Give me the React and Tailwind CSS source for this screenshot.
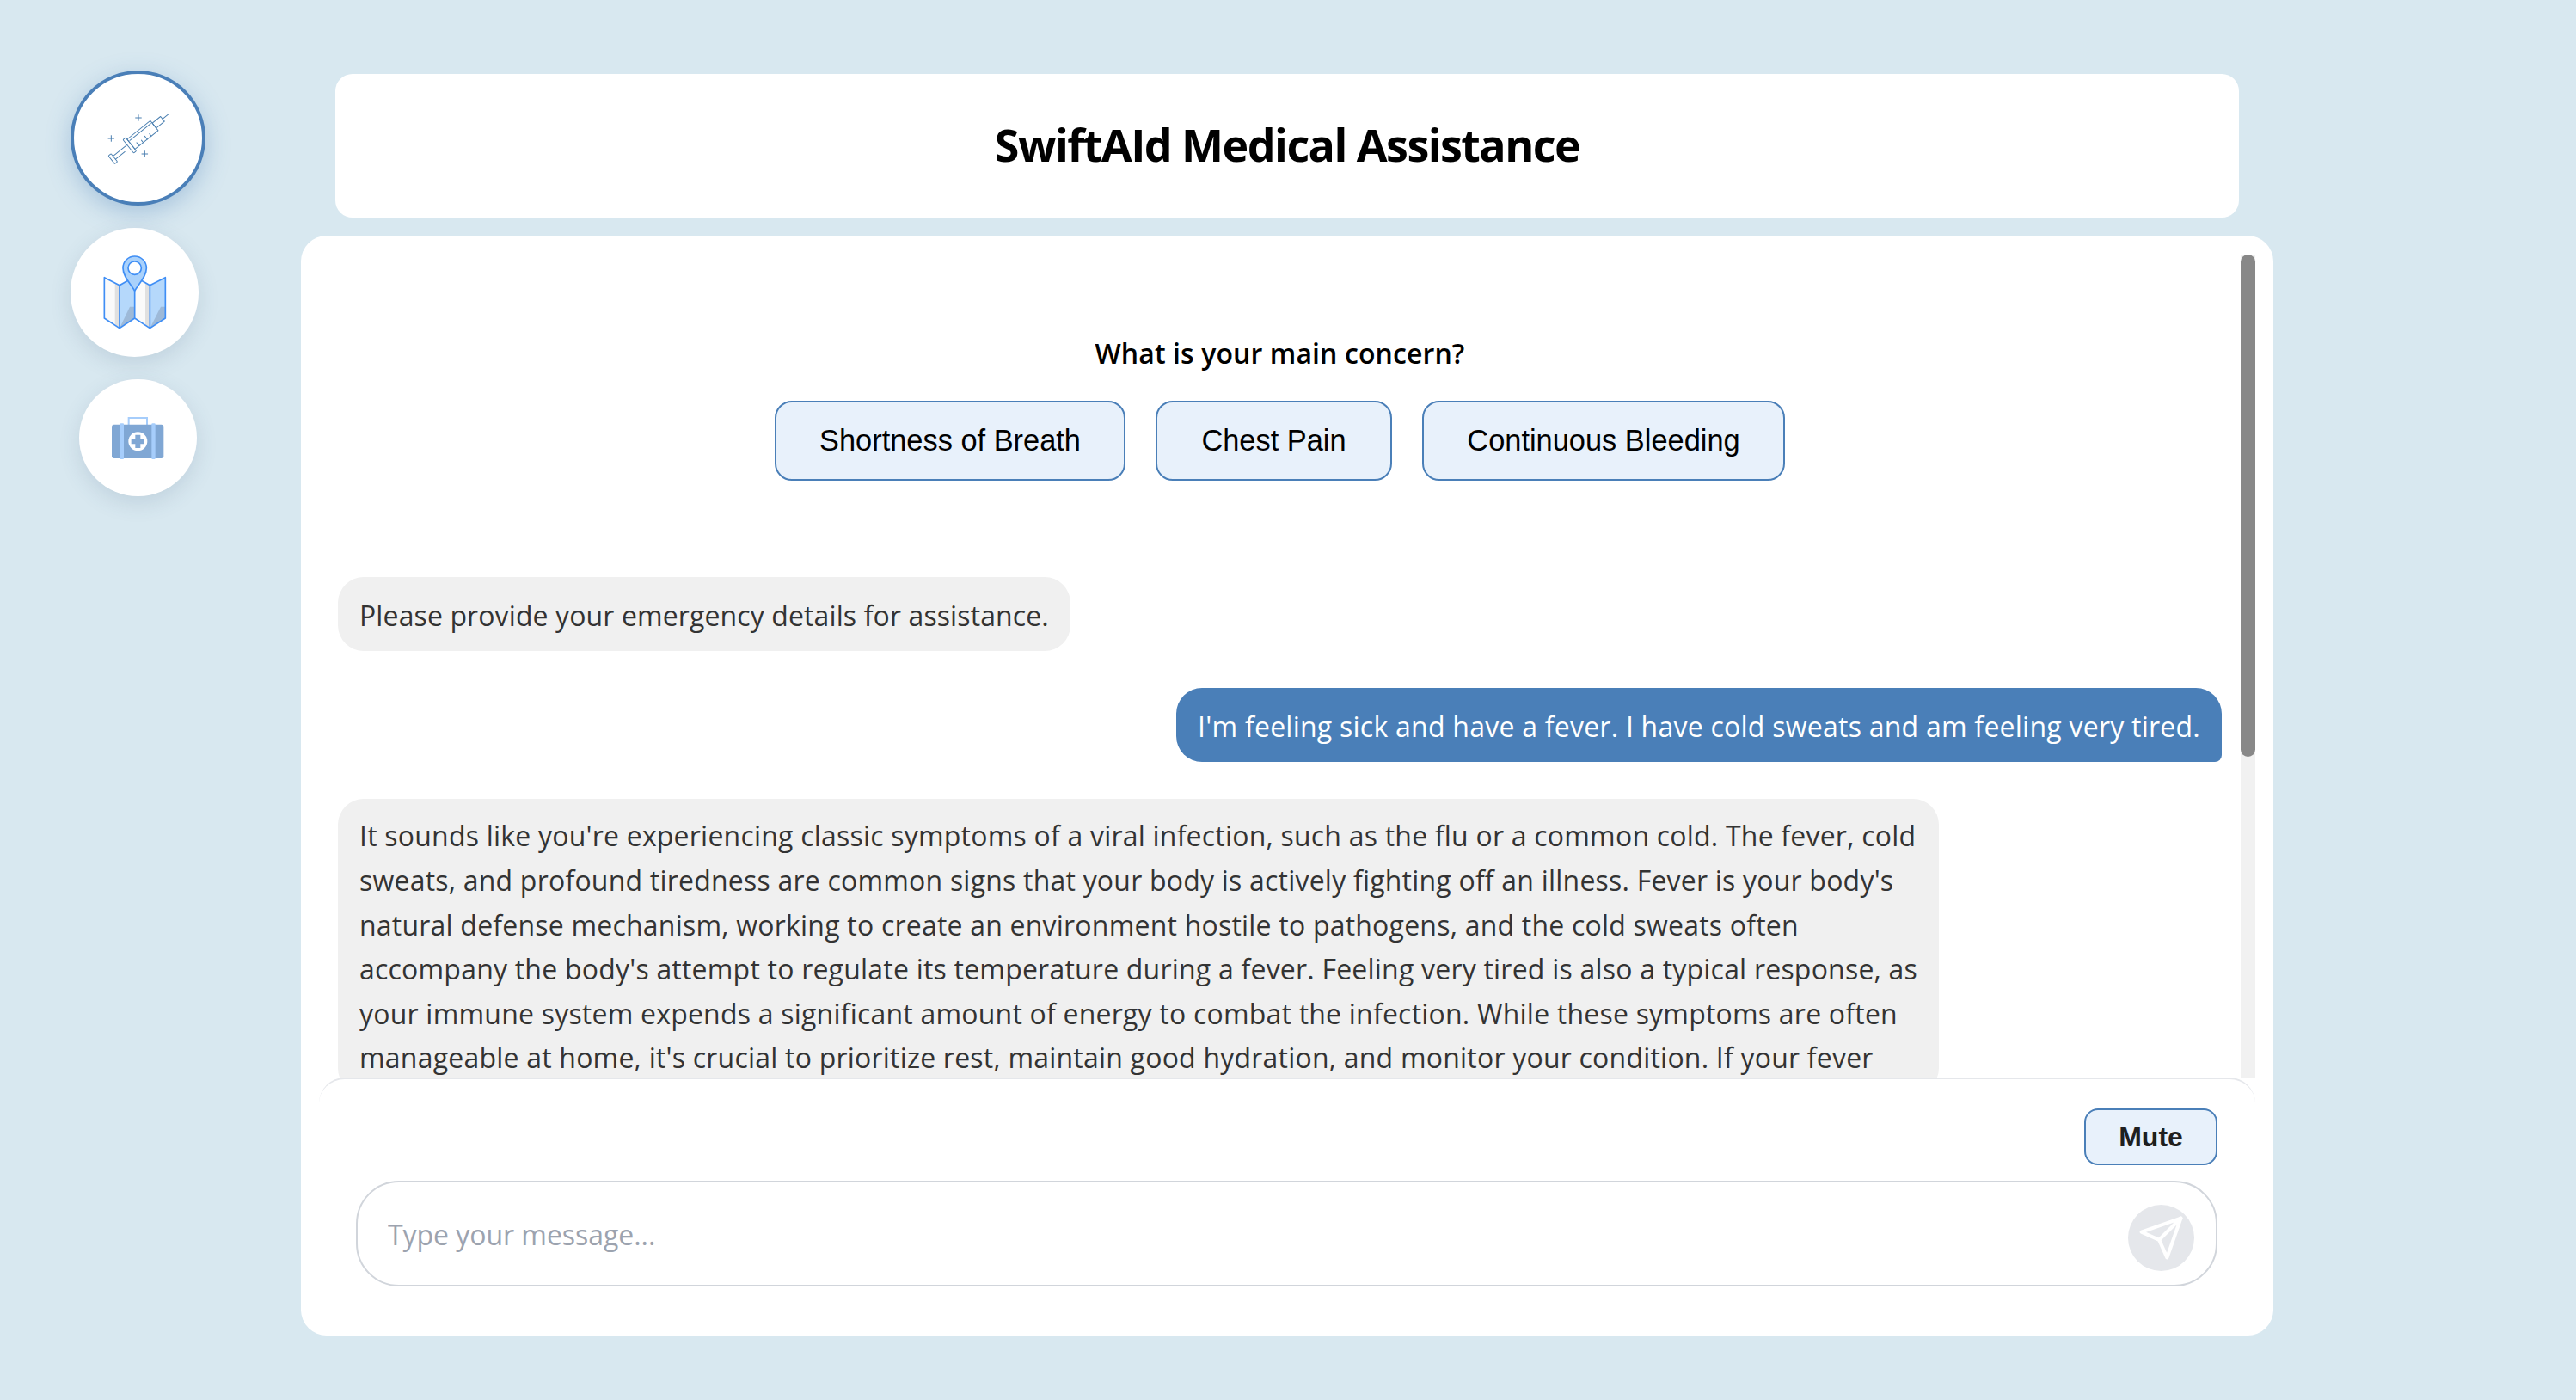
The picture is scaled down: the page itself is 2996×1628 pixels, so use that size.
const bodyFont = "font-['Open_Sans','Noto_Sans',sans-serif]";

function Syringe() {
  return (
    <svg width="100" height="100" viewBox="151 151 300 300" fill="none" stroke="#4a7fb0" strokeWidth="3" strokeLinejoin="round" strokeLinecap="round">
      <path d="M304 219v20M294 229h20M209 291v20M199 301h20M326 345v20M316 355h20" />
      <g transform="translate(215 372) rotate(-38.8)">
        <rect x="-6" y="-18" width="12" height="36" rx="3" />
        <path d="M6 -7H69M6 7H48" />
        <rect x="69" y="-30" width="12" height="60" rx="3" />
        <rect x="81" y="-22" width="104" height="44" />
        <path d="M86 -13H180M100 22V8M118 22V12M136 22V8M154 22V12" />
        <rect x="185" y="-11" width="37" height="22" />
        <path d="M222 0H247" />
      </g>
    </svg>
  );
}

function MapIcon() {
  return (
    <svg width="100" height="100" viewBox="140 120 300 300" fill="none" strokeLinejoin="round">
      <path d="M183 218L236 245V395L183 360Z" fill="#fafafa" />
      <path d="M220 237L236 245V395L220 385Z" fill="#e0e0e0" />
      <path d="M236 245L289 215V360L236 395Z" fill="#b5d8fb" />
      <path d="M272 320L289 320V360L236 395Z" fill="#9db9d8" />
      <path d="M289 215L342 245V395L289 360Z" fill="#fafafa" />
      <path d="M326 236L342 245V395L326 385Z" fill="#e0e0e0" />
      <path d="M342 245L396 218V360L342 395Z" fill="#b5d8fb" />
      <path d="M380 320L396 320V360L342 395Z" fill="#9db9d8" />
      <path d="M236 245L183 218V360L236 395L289 360L342 395L396 360V218L342 245L289 215L236 245ZM236 245V395M289 265V360M342 245V395" stroke="#3f8ef5" strokeWidth="5" />
      <path d="M289 265C275 240 248 215 248 185A41 41 0 0 1 330 185C330 215 303 240 289 265Z" fill="#a9d1fb" stroke="#3f8ef5" strokeWidth="5" />
      <circle cx="289" cy="185" r="23" fill="#fff" stroke="#3f8ef5" strokeWidth="5" />
    </svg>
  );
}

function KitIcon() {
  return (
    <svg width="100" height="100" viewBox="151 627 300 300" fill="none">
      <rect x="270" y="708" width="64" height="30" stroke="#a6cdfb" strokeWidth="6" />
      <rect x="211" y="731" width="181" height="118" rx="8" fill="#80a7d4" />
      <rect x="240" y="727" width="13" height="125" rx="3" fill="#a6cdfb" />
      <rect x="350" y="727" width="13" height="125" rx="3" fill="#a6cdfb" />
      <circle cx="302" cy="790" r="30" fill="#fff" stroke="#fff" strokeWidth="6" />
      <path d="M293 767h18v14h14v18h-14v14h-18v-14h-14v-18h14Z" fill="#80a7d4" />
    </svg>
  );
}

function SendIcon() {
  return (
    <svg width="55" height="55" viewBox="0 0 24 24" fill="none" stroke="#fff" strokeWidth="1.8" strokeLinecap="round" strokeLinejoin="round">
      <path d="m22 2-7 20-4-9-9-4Z" />
      <path d="M22 2 11 13" />
    </svg>
  );
}

function ConcernButton({ children, width }) {
  return (
    <button className={`h-[93px] rounded-[20px] border-2 border-[#4a7fb8] bg-[#e8f1fb] font-['Liberation_Sans',Arial,sans-serif] text-[34.4px] text-black ${width}`}>
      {children}
    </button>
  );
}

export default function App() {
  return (
    <div className={`flex h-screen overflow-hidden bg-[#d8e8f0] ${bodyFont}`}>
      <aside className="flex w-[320px] shrink-0 flex-col items-center gap-[26px] pt-[82px]">
        <div className="flex h-[157px] w-[157px] items-center justify-center rounded-full border-4 border-[#4a7fb8] bg-white shadow-[0_8px_28px_rgba(74,127,184,0.35)]">
          <Syringe />
        </div>
        <div className="mr-[7px] flex h-[150px] w-[149px] items-center justify-center rounded-full bg-white shadow-[0_8px_24px_rgba(60,90,120,0.15)]">
          <MapIcon />
        </div>
        <div className="flex h-[136px] w-[137px] items-center justify-center rounded-full bg-white shadow-[0_8px_24px_rgba(60,90,120,0.15)]">
          <KitIcon />
        </div>
      </aside>

      <div className="ml-[30px] flex w-[2294px] flex-col items-center gap-[21px] pt-[86px]">
        <header className="flex h-[167px] w-[2214px] items-center justify-center rounded-[20px] bg-white pb-[3px]">
          <h1 className="text-[52px] font-bold tracking-[-1.55px] text-black">SwiftAId Medical Assistance</h1>
        </header>

        <main className="flex h-[1279px] w-full flex-col rounded-[30px] bg-white px-[21px] pb-[21px] pt-[22px]">
          <div className="flex h-[957px] shrink-0">
            <div className="flex min-w-0 flex-1 flex-col overflow-hidden px-[22px] pt-[90px]">
              <p className="text-center text-[32px] font-semibold leading-[50px] tracking-[0.1px] text-black">What is your main concern?</p>
              <div className="mt-[30px] flex justify-center gap-[35px]">
                <ConcernButton width="w-[408px]">Shortness of Breath</ConcernButton>
                <ConcernButton width="w-[275px]">Chest Pain</ConcernButton>
                <ConcernButton width="w-[422px]">Continuous Bleeding</ConcernButton>
              </div>
              <div className="mt-[112px] flex flex-col gap-[43px] text-[32px] leading-[51.6px]">
                <div className="self-start whitespace-nowrap rounded-[30px] bg-[#f0f0f0] pb-[15.4px] pl-[25px] pr-[25px] pt-[19px] tracking-[0.11px] text-[#333]">
                  Please provide your emergency details for assistance.
                </div>
                <div className="self-end whitespace-nowrap rounded-[30px] rounded-br-[8px] bg-[#4a7fb8] pb-[15.4px] pl-[25px] pr-[25px] pt-[19px] tracking-[0.24px] text-white">
                  I'm feeling sick and have a fever. I have cold sweats and am feeling very tired.
                </div>
                <div className="w-[85%] shrink-0 self-start whitespace-nowrap rounded-[30px] bg-[#f0f0f0] pb-[16.4px] pl-[25px] pr-[25px] pt-[17.5px] tracking-[0.21px] text-[#333]">
                  It sounds like you're experiencing classic symptoms of a viral infection, such as the flu or a common cold. The fever, cold<br />
                  sweats, and profound tiredness are common signs that your body is actively fighting off an illness. Fever is your body's<br />
                  natural defense mechanism, working to create an environment hostile to pathogens, and the cold sweats often<br />
                  accompany the body's attempt to regulate its temperature during a fever. Feeling very tired is also a typical response, as<br />
                  your immune system expends a significant amount of energy to combat the infection. While these symptoms are often<br />
                  manageable at home, it's crucial to prioritize rest, maintain good hydration, and monitor your condition. If your fever
                </div>
              </div>
            </div>
            <div className="h-full w-[17px] shrink-0 bg-[#f1f1f1]">
              <div className="h-[584px] w-full rounded-full bg-[#888]" />
            </div>
          </div>

          <div className="flex flex-1 flex-col rounded-t-[30px] border-t-2 border-[#e5e7eb] pl-[43px] pr-[44px] pt-[34px]">
            <div className="flex justify-end">
              <button className="h-[66px] w-[155px] rounded-[16px] border-2 border-[#4a7fb8] bg-[#e8f1fb] font-['Liberation_Sans',Arial,sans-serif] text-[32px] font-bold text-[#1f1f1f]">
                Mute
              </button>
            </div>
            <div className="mt-[18px] flex h-[123px] items-center rounded-[50px] border-2 border-[#d1d5db] pl-[35px] pr-[25px]">
              <input
                placeholder="Type your message..."
                className="mt-[3px] min-w-0 flex-1 bg-transparent text-[32px] tracking-[-0.05px] text-[#333] outline-none placeholder:text-[#9ca3af]"
              />
              <button className="mt-[10px] flex h-[77px] w-[77px] shrink-0 items-center justify-center rounded-full bg-[#e5e7eb]">
                <SendIcon />
              </button>
            </div>
          </div>
        </main>
      </div>
    </div>
  );
}
